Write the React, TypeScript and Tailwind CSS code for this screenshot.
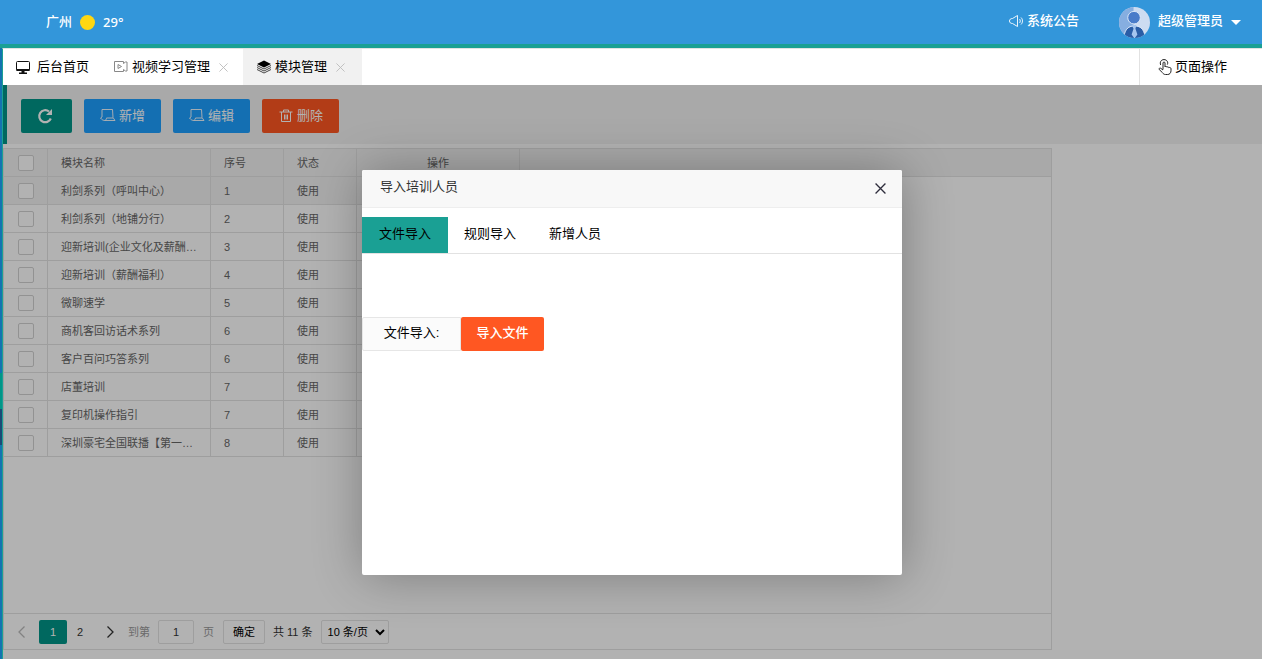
import type { ReactNode } from "react";

const rows = [
  { name: "利剑系列（呼叫中心）", no: 1 },
  { name: "利剑系列（地铺分行）", no: 2 },
  { name: "迎新培训(企业文化及薪酬福利)", no: 3 },
  { name: "迎新培训（薪酬福利）", no: 4 },
  { name: "微聊速学", no: 5 },
  { name: "商机客回访话术系列", no: 6 },
  { name: "客户百问巧答系列", no: 6 },
  { name: "店董培训", no: 7 },
  { name: "复印机操作指引", no: 7 },
  { name: "深圳豪宅全国联播【第一季】", no: 8 },
];

function CloseIcon({ className }: { className: string }) {
  return (
    <svg viewBox="0 0 10 10" className={className} fill="none" stroke="currentColor">
      <path d="M0.5 0.5l9 9M9.5 0.5l-9 9" />
    </svg>
  );
}

function MonitorIcon() {
  return (
    <svg viewBox="0 0 16 16" className="h-4 w-4" fill="none" stroke="#111">
      <rect x="1.500" y="2.500" width="13" height="9" rx="1" />
      <path d="M1.500 10h13v2h-13zM6.500 12h3v1.500H12V15H4v-1.500h2.500z" fill="#111" stroke="none" />
    </svg>
  );
}

function VideoIcon() {
  return (
    <svg viewBox="0 0 16 14" className="h-3.5 w-4" fill="none" stroke="#888">
      <path d="M10.500 3.500v-2h-9v10h9v-2M10.500 3.500l2-1.500h1.500v9h-1.500l-2-1.500" />
      <path d="M5 4.500v4l3.500-2z" />
    </svg>
  );
}

function LayersIcon() {
  return (
    <svg viewBox="0 0 16 14" className="h-3.5 w-4" fill="none" stroke="#333">
      <path d="M8 0.500L15 4 8 7.500 1 4z" fill="#000" stroke="none" />
      <path d="M1 5.500L8 9l7-3.500M1 7.500L8 11l7-3.500M1 9.500L8 13l7-3.500" strokeWidth="0.900" />
    </svg>
  );
}

function HandIcon() {
  return (
    <svg viewBox="0 0 14 16" className="h-4 w-3.5" fill="none" stroke="#222">
      <path d="M5 10.500V4c0-1.300 2-1.300 2 0v4c.3-.9 1.700-.8 1.900.2.500-.7 1.800-.4 1.900.5.600-.5 2.200-.2 2.200 1v2c0 2.300-1.500 3.800-3.300 3.800H7.500c-1.500 0-2.300-.8-3-1.800L1.200 10.500c-.7-1 .8-2 1.800-1l2 1.500" />
      <path d="M2.700 6C1.500 3.300 3 .6 6 .6s4.500 2.700 3.300 5" />
    </svg>
  );
}

function SpeakerIcon() {
  return (
    <svg viewBox="0 0 15 12" className="h-3 w-[15px]" fill="none" stroke="#fff" strokeWidth="0.900">
      <path d="M3.500 3.500C1.500 3.500 0.500 4.500 0.500 6s1 2.500 3 2.500l5 3v-11z" />
      <path d="M10.500 4c1 1 1 3 0 4M12 2.500c2 2 2 5 0 7" />
    </svg>
  );
}

function ScreenIcon() {
  return (
    <svg viewBox="0 0 16 13" className="h-[13px] w-4" fill="none" stroke="#fff" strokeWidth="0.900">
      <path d="M2 0.500h10.500l.5 8 2 3H5c-1.500 0-3-.5-4.500-2.500L2 8z" />
      <path d="M5 11.500c1-.5 1.500-1.500 1.500-2.500H13" />
    </svg>
  );
}

function TrashIcon() {
  return (
    <svg viewBox="0 0 14 14" className="mx-px h-3.5 w-3.5" fill="none" stroke="#fff">
      <path d="M0.500 3h13M4.500 3V1h5v2M2.500 3v9.500h9V3M5.500 5.500v5M7 5.500v5M8.500 5.500v5" />
    </svg>
  );
}

function RefreshIcon() {
  return (
    <svg viewBox="0 0 16 16" className="mr-[3px] h-4 w-4" fill="none" stroke="#fff" strokeWidth="2.200">
      <path d="M13.800 10.500A6 6 0 1 1 12 3.500" />
      <path d="M15 1v6H9z" fill="#fff" stroke="none" />
    </svg>
  );
}

function Avatar() {
  return (
    <svg viewBox="0 0 32 32" className="h-[31px] w-[31px]">
      <defs>
        <clipPath id="avatar-clip">
          <circle cx="16" cy="16" r="16" />
        </clipPath>
      </defs>
      <g clipPath="url(#avatar-clip)">
        <rect width="32" height="32" fill="#cddcf1" />
        <path d="M0 0h15v32H0z" fill="#86aee0" />
        <path d="M5 34c0-10 4-14.500 11-14.500S27 24 27 34z" fill="#2a5da6" stroke="#dce8f8" />
        <circle cx="15.500" cy="11" r="6.500" fill="#4a7cc9" stroke="#dce8f8" />
        <path d="M13 18.500h5l-1 4 2 6-3 4-3-4 2-6z" fill="#a5c5ee" />
      </g>
    </svg>
  );
}

function ToolButton({ color, label, children }: { color: string; label: string; children: ReactNode }) {
  return (
    <button className={`flex h-[34px] items-center justify-center gap-[3px] rounded-xs px-4 text-white ${color}`}>
      {children}
      {label}
    </button>
  );
}

function Header() {
  return (
    <header className="flex h-12 items-center justify-between border-b-4 border-[#1aa094] bg-[#3396da] pr-[21px] pl-[46px] font-medium text-white">
      <div className="flex items-center gap-2">
        <span>广州</span>
        <span className="h-[15px] w-[15px] rounded-full bg-[#ffd712]" />
        <span className="font-['Noto_Sans',sans-serif]">29°</span>
      </div>
      <div className="flex items-center">
        <a href="#notice" className="mr-10 flex items-center gap-[3px] pb-0.5">
          <SpeakerIcon />
          系统公告
        </a>
        <button className="flex items-center gap-2">
          <Avatar />
          <span className="pb-0.5">超级管理员</span>
          <svg viewBox="0 0 10 5" className="h-[5px] w-2.5" fill="#fff">
            <path d="M0 0h10L5 5z" />
          </svg>
        </button>
      </div>
    </header>
  );
}

function TabBar() {
  return (
    <nav className="ml-[2px] flex h-[37px] border-t border-l border-t-[#e2e2e2] border-l-[#1aa094] bg-white text-black">
      <a href="#home" className="flex items-center gap-1.5 px-3">
        <MonitorIcon />
        后台首页
      </a>
      <a href="#video" className="flex items-center gap-[3px] pr-[15px] pl-3">
        <VideoIcon />
        视频学习管理
        <CloseIcon className="ml-1.5 h-[9px] w-[9px] text-[#bbb]" />
      </a>
      <a href="#module" className="flex items-center gap-[3px] bg-[#f1f1f1] pr-[17px] pl-[13px]">
        <LayersIcon />
        模块管理
        <CloseIcon className="ml-1.5 h-[9px] w-[9px] text-[#bbb]" />
      </a>
      <button className="ml-auto flex w-[123px] items-center gap-[3px] border-l border-[#e2e2e2] pl-[18px]">
        <HandIcon />
        页面操作
      </button>
    </nav>
  );
}

function Check({ label }: { label: string }) {
  return (
    <input
      type="checkbox"
      aria-label={label}
      className="mx-auto block h-4 w-4 appearance-none rounded-xs border border-[#d2d2d2] bg-white"
    />
  );
}

function ModuleTable() {
  const cell = "h-7 border-r border-b border-[#e2e2e2] px-[13px] text-left font-normal";
  return (
    <table className="w-full table-fixed border-separate border-spacing-0 text-[11px] leading-4 text-[#666]">
      <colgroup>
        <col className="w-[44px]" />
        <col className="w-[163px]" />
        <col className="w-[73px]" />
        <col className="w-[73px]" />
        <col className="w-[163px]" />
        <col />
      </colgroup>
      <thead className="bg-[#f2f2f2]">
        <tr>
          <th className="h-7 border-r border-b border-[#e2e2e2]">
            <Check label="全选" />
          </th>
          <th className={cell}>模块名称</th>
          <th className={cell}>序号</th>
          <th className={cell}>状态</th>
          <th className="border-r border-b border-[#e2e2e2] text-center font-normal">操作</th>
          <th className="border-b border-[#e2e2e2]" />
        </tr>
      </thead>
      <tbody>
        {rows.map((row, i) => (
          <tr key={row.name} className={i === 0 ? "bg-[#f2f2f2]" : ""}>
            <td className="h-7 border-r border-b border-[#e2e2e2]">
              <Check label={row.name} />
            </td>
            <td className={`${cell} truncate`}>{row.name}</td>
            <td className={cell}>{row.no}</td>
            <td className={cell}>使用</td>
            <td className={cell} />
            <td className="bg-white" />
          </tr>
        ))}
      </tbody>
    </table>
  );
}

function Pager() {
  return (
    <div className="flex h-9 items-center border-t border-[#e2e2e2] text-[11px] text-[#333]">
      <button aria-label="上一页" className="flex w-[35px] justify-center text-[#bbb]">
        <svg viewBox="0 0 7 12" className="h-3 w-[7px]" fill="none" stroke="currentColor" strokeWidth="1.300">
          <path d="M6.500 0.500L1 6l5.500 5.500" />
        </svg>
      </button>
      <button className="h-6 w-7 rounded-xs bg-[#009688] text-white">1</button>
      <button className="h-6 w-[26px]">2</button>
      <button aria-label="下一页" className="flex w-[35px] justify-center">
        <svg viewBox="0 0 7 12" className="h-3 w-[7px]" fill="none" stroke="currentColor" strokeWidth="1.300">
          <path d="M0.500 0.500L6 6l-5.500 5.500" />
        </svg>
      </button>
      <label className="flex items-center text-[#999]">
        到第
        <input
          defaultValue="1"
          className="mr-[9px] ml-2 h-6 w-9 rounded-xs border border-[#e2e2e2] bg-white text-center text-[#333]"
        />
        页
      </label>
      <button className="ml-[9px] h-6 w-[42px] rounded-xs border border-[#e2e2e2] bg-white text-black">确定</button>
      <span className="mx-2">共 11 条</span>
      <select
        aria-label="每页条数"
        className="h-6 w-[68px] rounded-xs border border-[#e2e2e2] bg-white pl-[2px] text-black"
      >
        <option>10 条/页</option>
        <option>20 条/页</option>
      </select>
    </div>
  );
}

function ImportDialog() {
  return (
    <div
      role="dialog"
      aria-label="导入培训人员"
      className="h-[405px] w-[540px] rounded-xs bg-white text-black shadow-[1px_1px_50px_rgba(0,0,0,0.3)]"
    >
      <div className="flex h-[38px] items-center justify-between rounded-t-xs border-b border-[#eee] bg-[#f8f8f8] pr-4 pl-[18px] text-[#333]">
        <h2 className="pb-0.5">导入培训人员</h2>
        <button aria-label="关闭" className="pt-px">
          <CloseIcon className="h-[11px] w-[11px] stroke-[1.2px] text-[#2e2d3c]" />
        </button>
      </div>
      <div className="mt-[9px] flex h-[37px] border-b border-[#e2e2e2]">
        <button className="bg-[#1aa094] px-[17px] pb-0.5">文件导入</button>
        <button className="px-4 pb-0.5">规则导入</button>
        <button className="px-[17px] pb-0.5">新增人员</button>
      </div>
      <div className="mt-[63px] flex h-[34px]">
        <span id="import-label" className="flex w-[99px] items-center justify-center rounded-l-xs border border-[#e6e6e6] bg-[#fbfbfb] pb-0.5">
          文件导入:
        </span>
        <button aria-describedby="import-label" className="w-[83px] rounded-xs bg-[#ff5722] pb-0.5 font-medium text-white">
          导入文件
        </button>
      </div>
    </div>
  );
}

export default function App() {
  return (
    <div className="flex h-screen flex-col overflow-hidden bg-[#1473b0] font-['Liberation_Sans','Noto_Sans_CJK_SC',sans-serif] text-[13px] leading-5">
      <Header />
      <TabBar />
      <div className="flex min-h-0 flex-1">
        <div className="flex w-[2px] flex-col pt-[288px]">
          <div className="h-9 bg-[#009688]" />
          <div className="h-9 bg-[#1b4a75]" />
        </div>
        <main className="relative flex-1 border-l border-[#1aa094] bg-white">
          <div className="flex h-[59px] items-center gap-3 border-l-4 border-[#009688] bg-[#f2f2f2] pt-0.5 pl-[14px]">
            <button aria-label="刷新" className="flex h-[34px] w-[51px] items-center justify-center rounded-xs bg-[#009688]">
              <RefreshIcon />
            </button>
            <ToolButton color="bg-[#1e9fff]" label="新增">
              <ScreenIcon />
            </ToolButton>
            <ToolButton color="bg-[#1e9fff]" label="编辑">
              <ScreenIcon />
            </ToolButton>
            <ToolButton color="bg-[#ff5722]" label="删除">
              <TrashIcon />
            </ToolButton>
          </div>
          <div className="mt-1 flex h-[502px] w-[1049px] flex-col border border-[#e2e2e2]">
            <div className="flex-1">
              <ModuleTable />
            </div>
            <Pager />
          </div>
          <div className="absolute inset-0 flex items-center justify-center bg-black/30 pr-px">
            <ImportDialog />
          </div>
        </main>
      </div>
    </div>
  );
}
